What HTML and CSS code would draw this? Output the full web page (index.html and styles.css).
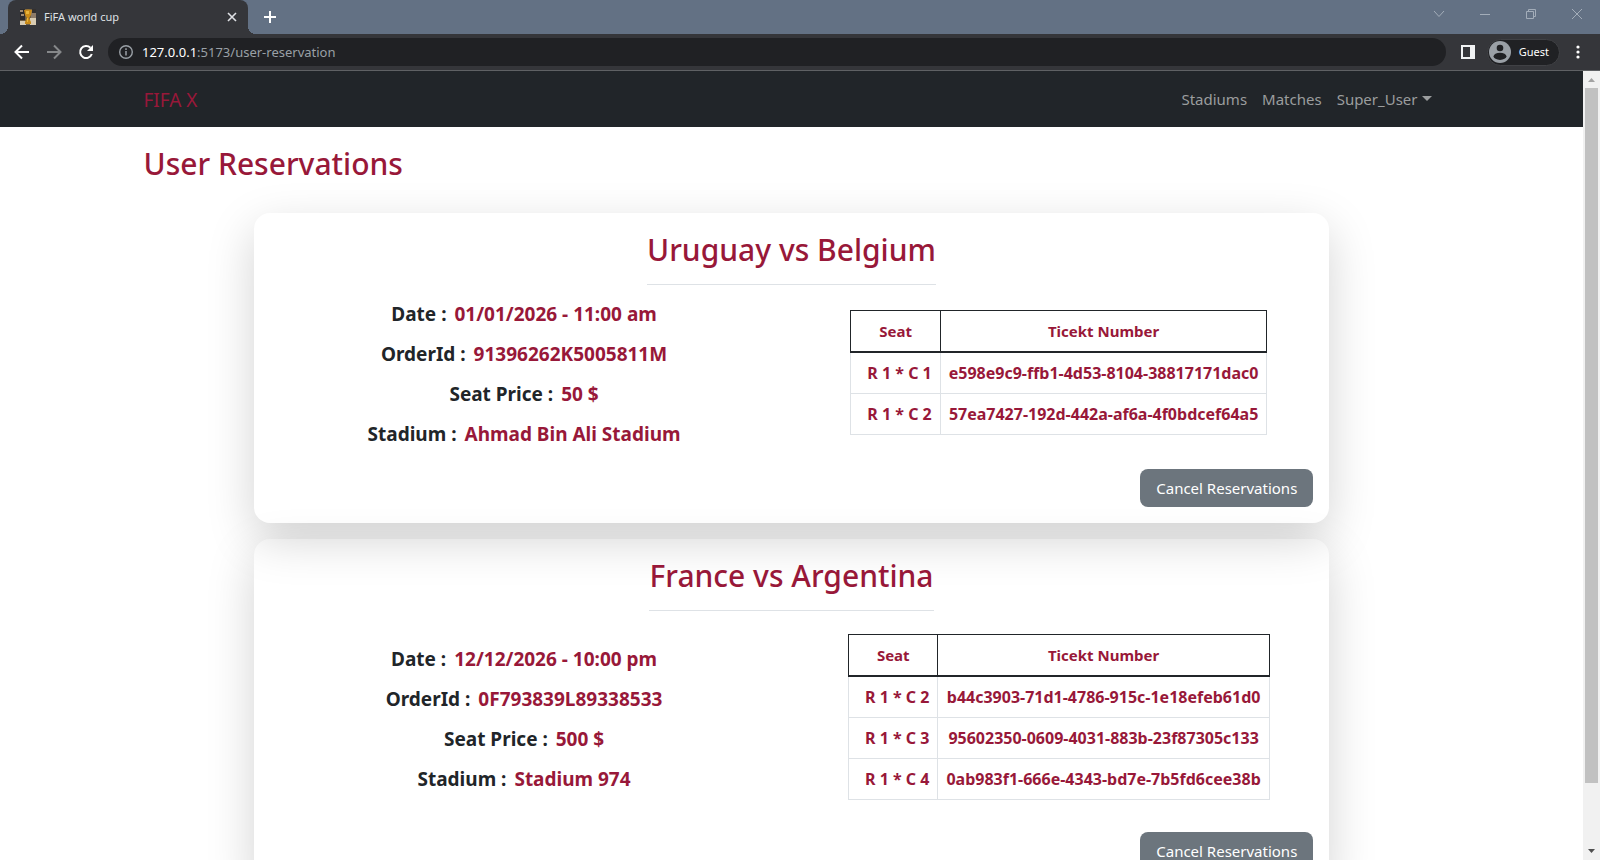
FILE: index.html
```html
<!DOCTYPE html>
<html lang="en">
<head>
<meta charset="utf-8">
<title>FiFA world cup</title>
<link rel="stylesheet" href="styles.css">
</head>
<body>
<div class="browser">
  <div class="tab-strip">
    <div class="tab">
      <svg class="favicon" width="16" height="16" viewBox="0 0 16 16" aria-hidden="true">
        <rect width="16" height="16" fill="#6f5f45"/>
        <path d="M0 0h5v11H0z" fill="#2b2a2c"/>
        <path d="M0 1h3v2H0zM1 5h3v2H1z" fill="#a08c74"/>
        <path d="M11 1h5v8h-5z" fill="#8d7b68"/>
        <path d="M12 0h4v4h-4z" fill="#33302f"/>
        <path d="M0 12h6v4H0zM10 9h6v7h-6z" fill="#d9ccb2"/>
        <path d="M4 1q4-1 8 0l-1 5-2 3 2 4v2H5v-2l2-4-2-3z" fill="#c98a17"/>
        <path d="M6 2h3v3H6zM7 9h1v4H7z" fill="#e8b53c"/>
      </svg>
      <span class="tab-title">FiFA world cup</span>
      <button class="icon-btn tab-close" aria-label="Close tab">
        <svg width="10" height="10" viewBox="0 0 10 10"><path d="M1 1l8 8M9 1L1 9" stroke="#dfe1e5" stroke-width="1.6"/></svg>
      </button>
    </div>
    <button class="icon-btn new-tab" aria-label="New tab">
      <svg width="12" height="12" viewBox="0 0 12 12"><path d="M6 0v12M0 6h12" stroke="#fff" stroke-width="2"/></svg>
    </button>
    <div class="window-controls">
      <button class="icon-btn" aria-label="Search tabs"><svg width="12" height="12" viewBox="0 0 12 12"><path d="M1 3l5 5.500 5-5.500" fill="none" stroke="#a3adb9"/></svg></button>
      <button class="icon-btn" aria-label="Minimize"><svg width="12" height="12" viewBox="0 0 12 12"><path d="M1 6.500h10" stroke="#a3adb9"/></svg></button>
      <button class="icon-btn" aria-label="Restore"><svg width="12" height="12" viewBox="0 0 12 12"><path d="M1.500 3.500h7v7h-7zM3.500 3.500v-2h7v7h-2" fill="none" stroke="#a3adb9"/></svg></button>
      <button class="icon-btn" aria-label="Close"><svg width="12" height="12" viewBox="0 0 12 12"><path d="M1 1l10 10M11 1L1 11" stroke="#a3adb9"/></svg></button>
    </div>
  </div>
  <div class="toolbar">
    <button class="icon-btn" aria-label="Back"><svg width="16" height="16" viewBox="0 0 16 16"><path d="M15 8H2M8 1.500L1.500 8 8 14.500" fill="none" stroke="#fff" stroke-width="2"/></svg></button>
    <button class="icon-btn" aria-label="Forward"><svg width="16" height="16" viewBox="0 0 16 16"><path d="M1 8h13M8 1.500L14.500 8 8 14.500" fill="none" stroke="#86888a" stroke-width="2"/></svg></button>
    <button class="icon-btn" aria-label="Reload"><svg width="16" height="16" viewBox="0 0 16 16"><path d="M13.800 10A6 6 0 1 1 12.400 3.800" fill="none" stroke="#fff" stroke-width="2"/><path d="M15 1v6H9z" fill="#fff"/></svg></button>
    <div class="address">
      <svg width="14" height="14" viewBox="0 0 14 14" aria-hidden="true"><circle cx="7" cy="7" r="6.300" fill="none" stroke="#9aa0a6" stroke-width="1.400"/><path d="M7 6v4.500M7 3.300v1.600" stroke="#9aa0a6" stroke-width="1.500"/></svg>
      <span class="url"><span class="url-host">127.0.0.1</span>:5173/user-reservation</span>
    </div>
    <button class="icon-btn side-panel" aria-label="Side panel"><svg width="14" height="14" viewBox="0 0 14 14"><path d="M0 0h14v14H0zM2 2v10h7V2z" fill="#f1f3f4" fill-rule="evenodd"/></svg></button>
    <button class="profile">
      <svg width="22" height="22" viewBox="0 0 22 22" aria-hidden="true"><circle cx="11" cy="11" r="11" fill="#9aa0a6"/><circle cx="11" cy="7" r="3.300" fill="#202124"/><ellipse cx="11" cy="15.300" rx="6.400" ry="3.600" fill="#202124"/></svg>
      Guest
    </button>
    <button class="icon-btn menu" aria-label="Menu"><svg width="4" height="14" viewBox="0 0 4 14"><circle cx="2" cy="2" r="1.600" fill="#fff"/><circle cx="2" cy="7" r="1.600" fill="#fff"/><circle cx="2" cy="12" r="1.600" fill="#fff"/></svg></button>
  </div>
  <div class="viewport">
    <div class="page">
      <header class="navbar">
        <div class="container navbar-row">
          <a class="brand" href="#">FIFA X</a>
          <nav class="nav-links">
            <a href="#">Stadiums</a>
            <a href="#">Matches</a>
            <a class="dropdown" href="#">Super_User</a>
          </nav>
        </div>
      </header>
      <main class="container main">
        <h2 class="page-title">User Reservations</h2>
        <div class="cards">
          <section class="card">
            <h2 class="match">Uruguay vs Belgium</h2>
            <div class="card-body">
              <div class="info">
                <p><b>Date :</b> <span>01/01/2026 - 11:00 am</span></p>
                <p><b>OrderId :</b> <span>91396262K5005811M</span></p>
                <p><b>Seat Price :</b> <span>50 $</span></p>
                <p><b>Stadium :</b> <span>Ahmad Bin Ali Stadium</span></p>
              </div>
              <div class="tickets">
                <table>
                  <thead><tr><th>Seat</th><th>Ticekt Number</th></tr></thead>
                  <tbody>
                    <tr><td>R 1 * C 1</td><td>e598e9c9-ffb1-4d53-8104-38817171dac0</td></tr>
                    <tr><td>R 1 * C 2</td><td>57ea7427-192d-442a-af6a-4f0bdcef64a5</td></tr>
                  </tbody>
                </table>
              </div>
            </div>
            <button class="cancel">Cancel Reservations</button>
          </section>
          <section class="card">
            <h2 class="match">France vs Argentina</h2>
            <div class="card-body">
              <div class="info">
                <p><b>Date :</b> <span>12/12/2026 - 10:00 pm</span></p>
                <p><b>OrderId :</b> <span>0F793839L89338533</span></p>
                <p><b>Seat Price :</b> <span>500 $</span></p>
                <p><b>Stadium :</b> <span>Stadium 974</span></p>
              </div>
              <div class="tickets">
                <table>
                  <thead><tr><th>Seat</th><th>Ticekt Number</th></tr></thead>
                  <tbody>
                    <tr><td>R 1 * C 2</td><td>b44c3903-71d1-4786-915c-1e18efeb61d0</td></tr>
                    <tr><td>R 1 * C 3</td><td>95602350-0609-4031-883b-23f87305c133</td></tr>
                    <tr><td>R 1 * C 4</td><td>0ab983f1-666e-4343-bd7e-7b5fd6cee38b</td></tr>
                  </tbody>
                </table>
              </div>
            </div>
            <button class="cancel">Cancel Reservations</button>
          </section>
        </div>
      </main>
    </div>
    <div class="scrollbar" aria-hidden="true">
      <svg width="17" height="17" viewBox="0 0 17 17"><path d="M5 11h7L8.500 7z" fill="#a3a3a3"/></svg>
      <div class="track"><div class="thumb"></div></div>
      <svg width="17" height="17" viewBox="0 0 17 17"><path d="M5 6h7L8.500 10z" fill="#505050"/></svg>
    </div>
  </div>
</div>
</body>
</html>
```
FILE: styles.css
```css
* {
  box-sizing: border-box;
}

body {
  margin: 0;
  font-family: "Noto Sans", "Open Sans", sans-serif;
  font-size: 15px;
  line-height: 24px;
  color: #212529;
  background: #fff;
}

h2,
p {
  margin: 0;
}

a {
  text-decoration: none;
}

button {
  font: inherit;
}

.browser {
  display: flex;
  flex-direction: column;
  height: 100vh;
  overflow: hidden;
}

.icon-btn {
  display: flex;
  align-items: center;
  justify-content: center;
  padding: 0;
  border: 0;
  background: none;
}

/* Tab strip */
.tab-strip {
  display: flex;
  align-items: center;
  height: 34px;
  padding-left: 8px;
  background: #637184;
}

.tab {
  position: relative;
  display: flex;
  align-items: center;
  align-self: stretch;
  width: 240px;
  padding: 0 10px 0 12px;
  border-radius: 8px 8px 0 0;
  background: #35363a;
}

.tab::before,
.tab::after {
  content: "";
  position: absolute;
  bottom: 0;
  width: 8px;
  height: 8px;
}

.tab::before {
  right: 100%;
  background: radial-gradient(circle at 0 0, transparent 8px, #35363a 8px);
}

.tab::after {
  left: 100%;
  background: radial-gradient(circle at 100% 0, transparent 8px, #35363a 8px);
}

.tab-title {
  flex: 1;
  margin-left: 8px;
  font-size: 11px;
  color: #dfe1e5;
}

.tab-close {
  width: 12px;
  height: 16px;
}

.new-tab {
  margin-left: 16px;
}

.window-controls {
  display: flex;
  gap: 34px;
  margin-left: auto;
  padding: 0 17px 6px 0;
}

/* Toolbar */
.toolbar {
  display: flex;
  align-items: center;
  gap: 16px;
  height: 37px;
  padding: 0 20px 0 14px;
  border-bottom: 1px solid #5f6164;
  background: #35363a;
}

.address {
  display: flex;
  flex: 1;
  align-items: center;
  gap: 9px;
  height: 28px;
  margin-left: -2px;
  padding: 0 11px;
  border-radius: 14px;
  background: #202124;
}

.url {
  font-size: 13px;
  color: #9aa0a6;
}

.url-host {
  color: #fff;
}

.side-panel {
  margin: 0 -4px 0 -1px;
}

.profile {
  display: flex;
  align-items: center;
  gap: 8px;
  height: 27px;
  padding: 0 10px 0 1px;
  border: 1px solid #404145;
  border-radius: 14px;
  font-size: 11px;
  color: #fff;
  background: #202124;
}

/* Page */
.viewport {
  display: flex;
  flex: 1;
  min-height: 0;
}

.page {
  flex: 1;
  overflow: hidden;
}

.container {
  max-width: 1320px;
  margin: 0 auto;
  padding: 0 12px;
}

.navbar {
  background: #212529;
}

.navbar-row {
  display: flex;
  align-items: center;
  justify-content: space-between;
  height: 56px;
}

.brand {
  padding-top: 2px;
  font-size: 19px;
  line-height: 30px;
  color: #981839;
}

.nav-links {
  display: flex;
  gap: 15px;
}

.nav-links a {
  color: #9b9d9e;
}

.dropdown::after {
  content: "";
  display: inline-block;
  margin-left: 4px;
  border: 5px solid transparent;
  border-top-color: currentColor;
  border-bottom: 0;
  vertical-align: 4px;
}

.nav-links .dropdown {
  margin-right: 8px;
}

.main {
  padding-top: 16px;
}

.page-title,
.match {
  font-size: 30px;
  font-weight: 500;
  line-height: 42px;
  color: #981839;
}

.cards {
  display: flex;
  flex-direction: column;
  align-items: center;
  gap: 16px;
  padding-top: 28px;
}

.card {
  display: flex;
  flex-direction: column;
  align-items: center;
  width: 83%;
  padding: 16px;
  border-radius: 16px;
  box-shadow: 0 16px 48px rgba(0, 0, 0, 0.175);
}

.match {
  padding-bottom: 13px;
  border-bottom: 1px solid #dee2e6;
}

.card-body {
  display: grid;
  grid-template-columns: 1fr 1fr;
  align-self: stretch;
  align-items: center;
  justify-items: center;
  margin: 0 -13px;
  padding: 8px 0 15px;
}

.info {
  padding-top: 1px;
  text-align: center;
  font-size: 19px;
  font-weight: 700;
  line-height: 40px;
}

.info b {
  margin-right: 3px;
  font-weight: 700;
}

.info span {
  color: #981839;
}

.tickets {
  padding: 15px 0 17px;
}

table {
  border-collapse: collapse;
  font-weight: 700;
  color: #981839;
}

th,
td {
  padding: 8px;
  border: 1px solid #dee2e6;
  text-align: center;
}

td {
  font-size: 16px;
}

td:first-child {
  padding-left: 16px;
}

th {
  border: 1px solid #212529;
  border-bottom-width: 2px;
}

.cancel {
  align-self: flex-end;
  height: 38px;
  padding: 0 16px;
  border: 0;
  border-radius: 8px;
  color: #fff;
  background: #6c757d;
}

/* Scrollbar */
.scrollbar {
  display: flex;
  flex-direction: column;
  width: 17px;
  background: #f1f1f1;
}

.track {
  flex: 1;
  padding: 0 2px;
}

.thumb {
  height: 92%;
  background: #c1c1c1;
}
```
